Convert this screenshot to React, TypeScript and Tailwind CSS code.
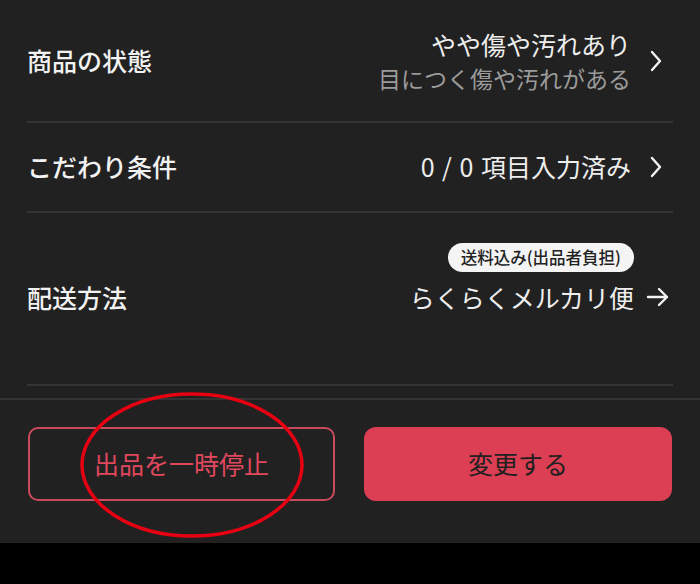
import React from 'react';

const font = { fontFamily: '"Noto Sans CJK JP", "Noto Sans", sans-serif' };

function Chevron() {
    return (
        <svg width="14" height="22" viewBox="0 0 14 22" fill="none" className="shrink-0">
            <path d="M3 2 L11 11 L3 20" stroke="#f2f2f2" strokeWidth="2.4" strokeLinecap="round" strokeLinejoin="round" />
        </svg>
    );
}

function Arrow() {
    return (
        <svg width="24" height="22" viewBox="0 0 24 22" fill="none" className="shrink-0">
            <path d="M2 11 H21 M13 3 L21 11 L13 19" stroke="#f2f2f2" strokeWidth="2.4" strokeLinecap="round" strokeLinejoin="round" />
        </svg>
    );
}

export default function App() {
    return (
        <div className="w-[700px] h-[584px] bg-black flex flex-col" style={font}>
            <div className="relative flex flex-col bg-[#212121] h-[543px]">
                {/* Rows */}
                <div className="px-[27px] flex flex-col">
                    {/* 商品の状態 */}
                    <div className="h-[123px] flex items-center justify-between border-b-2 border-[#343434]">
                        <span className="text-[25px] font-medium text-[#f2f2f2]">商品の状態</span>
                        <div className="flex items-center gap-[18px] pr-[10px]">
                            <div className="flex flex-col items-end leading-[34px]">
                                <span className="text-[25px] text-[#eeeeee]">やや傷や汚れあり</span>
                                <span className="text-[23px] text-[#9b9b9b]">目につく傷や汚れがある</span>
                            </div>
                            <Chevron />
                        </div>
                    </div>

                    {/* こだわり条件 */}
                    <div className="h-[90px] flex items-center justify-between border-b-2 border-[#343434]">
                        <span className="text-[25px] font-medium text-[#f2f2f2]">こだわり条件</span>
                        <div className="flex items-center gap-[18px] pr-[10px]">
                            <span className="text-[25px] text-[#eeeeee]">
                                <span className="tracking-[1px]">0 / 0 </span>項目入力済み
                            </span>
                            <Chevron />
                        </div>
                    </div>

                    {/* 配送方法 */}
                    <div className="h-[173px] flex items-start justify-between border-b-2 border-[#343434] pt-[30px]">
                        <span className="text-[25px] font-medium text-[#f2f2f2] leading-[34px] mt-[37px]">配送方法</span>
                        <div className="flex items-end gap-[12px] pr-[3px]">
                            <div className="flex flex-col items-end">
                                <span className="bg-[#f4f4f4] text-[#222] text-[16.5px] font-medium rounded-full h-[29px] px-[13px] flex items-center mb-[8px]">
                                    送料込み(出品者負担)
                                </span>
                                <span className="text-[25px] text-[#eeeeee] leading-[34px]">らくらくメルカリ便</span>
                            </div>
                            <div className="mb-[6px]">
                                <Arrow />
                            </div>
                        </div>
                    </div>
                </div>

                {/* Footer */}
                <div className="mt-[12px] border-t-2 border-[#343434] flex-1 flex items-start gap-[29px] px-[28px] pt-[27px]">
                    <button className="w-[307px] h-[74px] rounded-[10px] border-2 border-[#c94a5c] text-[#e0485e] text-[25px] flex items-center justify-center">
                        出品を一時停止
                    </button>
                    <button className="w-[308px] h-[74px] rounded-[12px] bg-[#dc3e53] text-[#202020] text-[25px] flex items-center justify-center">
                        変更する
                    </button>
                </div>

                {/* red annotation ellipse */}
                <svg className="absolute left-0 top-0 pointer-events-none" width="700" height="543">
                    <ellipse cx="192" cy="465" rx="110" ry="71" fill="none" stroke="#e60012" strokeWidth="3.5" />
                </svg>
            </div>
        </div>
    );
}
